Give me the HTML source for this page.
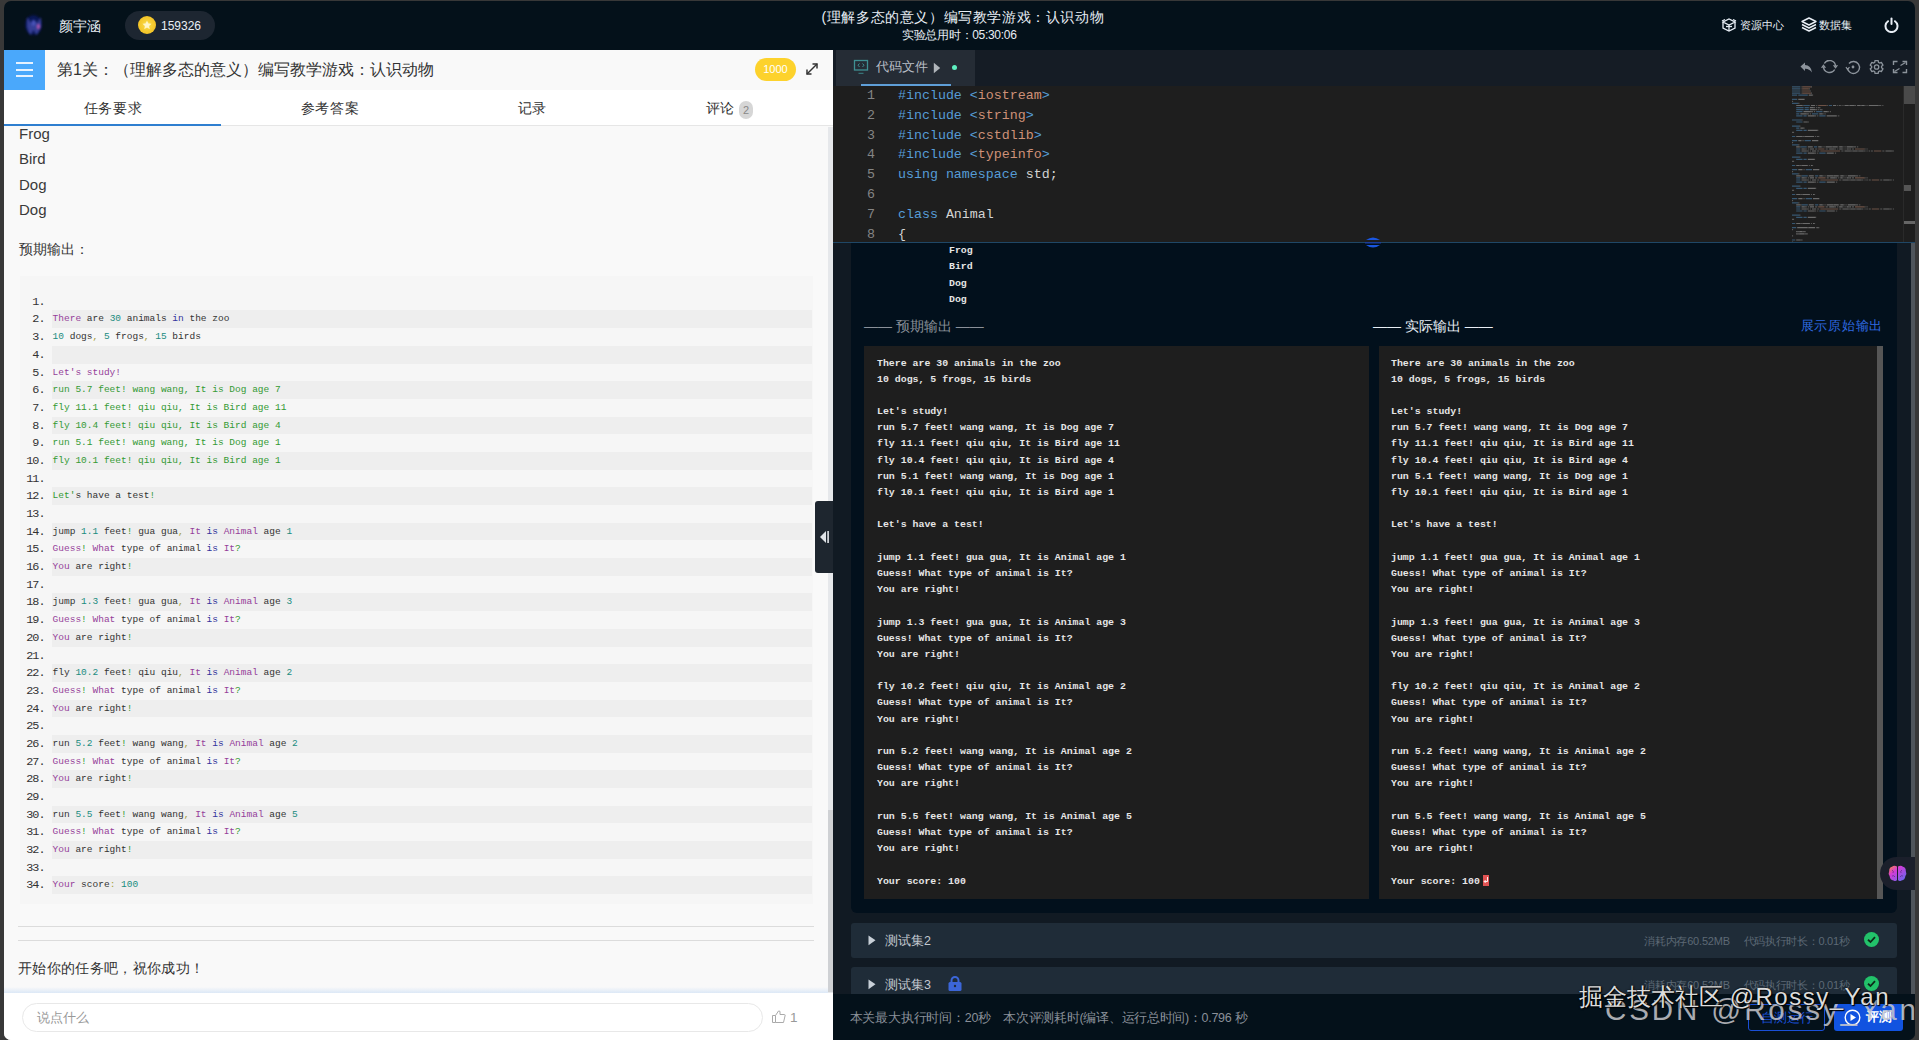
<!DOCTYPE html>
<html><head><meta charset="utf-8">
<style>
*{box-sizing:border-box;margin:0;padding:0}
html,body{width:1919px;height:1040px;overflow:hidden;background:#383838;font-family:"Liberation Sans",sans-serif}
.a{position:absolute;white-space:nowrap}
.mono{font-family:"Liberation Mono",monospace}
.cl{position:relative;height:17.69px;line-height:18.69px;font-family:"Liberation Mono",monospace;font-size:9.5px;color:#333;padding-left:48.6px;white-space:pre}
.cl.ev{background:linear-gradient(#eeeeee,#eeeeee) no-repeat 48px 0/760px 100%}
.cl i{font-style:normal;position:absolute;left:0;width:40.5px;text-align:right;font-size:11.8px;letter-spacing:-1px;color:#333}
.el{position:relative;height:19.83px;line-height:20.83px;font-family:"Liberation Mono",monospace;font-size:13.3px;color:#d4d4d4;padding-left:65px;white-space:pre}
.el i{font-style:normal;position:absolute;left:0;width:42px;text-align:right;color:#858585}
.out{font-family:"Liberation Mono",monospace;font-size:9.9px;line-height:16.19px;color:#e6e6e6;white-space:pre;font-weight:bold}
</style></head><body>
<!-- header -->
<div class="a" style="left:4px;top:1px;width:1911px;height:49px;background:#04111a;border-radius:7px 7px 0 0"></div>
<svg class="a" style="left:18px;top:9px" width="32" height="32" viewBox="18 9 32 32"><defs><radialGradient id="av"><stop offset="0" stop-color="#0d1d66"/><stop offset=".65" stop-color="#081650"/><stop offset="1" stop-color="#050d16" stop-opacity="0"/></radialGradient><filter id="bl"><feGaussianBlur stdDeviation="0.8"/></filter></defs><ellipse cx="33.5" cy="25" rx="11" ry="13" fill="url(#av)"/><g filter="url(#bl)"><path d="M27 17 L31 23 L34 20 L37 23 L41 17 L41 27 L38.5 32 L36.5 35 L33.5 30 L30.5 35 L28.5 32 L27 27 Z" fill="#3d44a0" opacity=".85"/><ellipse cx="38.5" cy="26.5" rx="1.5" ry="2.6" fill="#b058b0"/><ellipse cx="33.5" cy="23" rx="2" ry="3" fill="#4a52b8"/></g></svg>
<div class="a" style="left:59px;top:17px;font-size:14px;color:#e8eef5;line-height:18px">颜宇涵</div>
<div class="a" style="left:125px;top:11px;width:90px;height:29px;border-radius:15px;background:#1d2631"></div>
<div class="a" style="left:138px;top:16px;width:18px;height:18px;border-radius:50%;background:radial-gradient(circle,#fff3a0 0,#f7d23a 30%,#f0b818 100%)"></div>
<svg class="a" style="left:142px;top:20px" width="10" height="10" viewBox="0 0 10 10"><path d="M5 0.5 L6.3 3.6 L9.5 3.8 L7 5.9 L7.8 9.2 L5 7.4 L2.2 9.2 L3 5.9 L0.5 3.8 L3.7 3.6 Z" fill="#fff6c8"/></svg>
<div class="a" style="left:161px;top:18px;font-size:12px;color:#e8eef5;line-height:16px">159326</div>
<div class="a" style="left:821.5px;top:7.5px;font-size:14px;letter-spacing:0.6px;color:#e8eef5;line-height:18px">(理解多态的意义）编写教学游戏：认识动物</div>
<div class="a" style="left:902px;top:27px;font-size:12px;color:#e8eef5;line-height:16px;letter-spacing:-0.3px">实验总用时：05:30:06</div>
<svg class="a" style="left:1721px;top:17px" width="16" height="15" viewBox="0 0 16 15" fill="none" stroke="#e8eef5" stroke-width="1.3"><path d="M2 5 L8 2 L14 5 L8 8 Z"/><path d="M2 5 V11 L8 14 L14 11 V5"/><path d="M8 8 V14"/><path d="M1 4 L4 2.5 M15 4 L12 2.5"/><path d="M5 9.5 L11 9.5"/></svg>
<div class="a" style="left:1740px;top:17px;font-size:11px;color:#e8eef5;line-height:16px">资源中心</div>
<svg class="a" style="left:1801px;top:17px" width="16" height="15" viewBox="0 0 16 15" fill="none" stroke="#e8eef5" stroke-width="1.4" stroke-linejoin="round"><path d="M8 1 L15 4.5 L8 8 L1 4.5 Z"/><path d="M1 7.5 L8 11 L15 7.5"/><path d="M1 10.5 L8 14 L15 10.5"/></svg>
<div class="a" style="left:1819px;top:17px;font-size:11.3px;color:#e8eef5;line-height:16px">数据集</div>
<svg class="a" style="left:1883px;top:17px" width="17" height="16" viewBox="0 0 17 16" fill="none" stroke="#e8eef5" stroke-width="2" stroke-linecap="round"><path d="M5 4.2 A6 6 0 1 0 12 4.2"/><path d="M8.5 1.5 V7"/></svg>

<!-- left panel -->
<div class="a" style="left:4px;top:50px;width:829px;height:990px;background:#f9f9f9;border-radius:0 0 0 7px;overflow:hidden">
  <div class="a" style="left:0;top:0;width:41px;height:40px;background:#4aa8fb"></div>
  <div class="a" style="left:12px;top:12px;width:17px;height:2px;background:#e6f2ff"></div>
  <div class="a" style="left:12px;top:19px;width:17px;height:2px;background:#e6f2ff"></div>
  <div class="a" style="left:12px;top:25px;width:17px;height:2px;background:#e6f2ff"></div>
  <div class="a" style="left:53px;top:10px;font-size:16px;color:#333;line-height:20px">第1关：（理解多态的意义）编写教学游戏：认识动物</div>
  <div class="a" style="left:751px;top:8px;width:41px;height:23px;border-radius:12px;background:#fdd22c;color:#fff;font-size:11px;line-height:23px;text-align:center">1000</div>
  <svg class="a" style="left:801px;top:12px" width="14" height="14" viewBox="0 0 14 14" fill="none" stroke="#333" stroke-width="1.5"><path d="M2 12 L12 2"/><path d="M7.5 2 H12 V6.5"/><path d="M2 7.5 V12 H6.5"/></svg>
<div class="a" style="left:0;top:40px;width:829px;height:36px;background:#fff;border-bottom:1px solid #e6e6e6"></div>
  <div class="a" style="left:0;top:74px;width:217px;height:2px;background:#2f7fd0"></div>
  <div class="a" style="left:79.5px;top:49.3px;font-size:14px;letter-spacing:0.7px;color:#333;line-height:18px">任务要求</div>
  <div class="a" style="left:296.5px;top:49.3px;font-size:14px;letter-spacing:0.7px;color:#333;line-height:18px">参考答案</div>
  <div class="a" style="left:513.5px;top:49.3px;font-size:14px;letter-spacing:0.7px;color:#333;line-height:18px">记录</div>
  <div class="a" style="left:701.5px;top:49.3px;font-size:14px;letter-spacing:0.7px;color:#333;line-height:18px">评论</div>
  <div class="a" style="left:735px;top:51px;width:14px;height:18px;border-radius:8px;background:#d6d6d6;color:#888;font-size:11px;line-height:18px;text-align:center">2</div>

  <div class="a" style="left:15px;top:71px;font-size:15px;color:#3a3a3a;line-height:25.27px">Frog<br>Bird<br>Dog<br>Dog</div>
  <div class="a" style="left:15px;top:189.5px;font-size:14px;color:#333;line-height:18px">预期输出：</div>
  <div class="a" style="left:15.5px;top:225.6px;width:793px;height:628px;background:#f6f6f6"></div>
  <div class="a" style="left:0;top:242.8px;width:810px">
<div class="cl"><i>1.</i></div>
<div class="cl ev"><i>2.</i><span style="color:#953f9a">There</span> are <span style="color:#1a8c80">30</span> animals <span style="color:#32349c">in</span> the zoo</div>
<div class="cl"><i>3.</i><span style="color:#1a8c80">10</span> dogs<span style="color:#a8a040">,</span> <span style="color:#1a8c80">5</span> frogs<span style="color:#a8a040">,</span> <span style="color:#1a8c80">15</span> birds</div>
<div class="cl ev"><i>4.</i></div>
<div class="cl"><i>5.</i><span style="color:#953f9a">Let's study!</span></div>
<div class="cl ev"><i>6.</i><span style="color:#349a34">run 5.7 feet! wang wang, It is Dog age 7</span></div>
<div class="cl"><i>7.</i><span style="color:#349a34">fly 11.1 feet! qiu qiu, It is Bird age 11</span></div>
<div class="cl ev"><i>8.</i><span style="color:#349a34">fly 10.4 feet! qiu qiu, It is Bird age 4</span></div>
<div class="cl"><i>9.</i><span style="color:#349a34">run 5.1 feet! wang wang, It is Dog age 1</span></div>
<div class="cl ev"><i>10.</i><span style="color:#349a34">fly 10.1 feet! qiu qiu, It is Bird age 1</span></div>
<div class="cl"><i>11.</i></div>
<div class="cl ev"><i>12.</i><span style="color:#349a34">Let'</span>s have a test<span style="color:#349a34">!</span></div>
<div class="cl"><i>13.</i></div>
<div class="cl ev"><i>14.</i>jump <span style="color:#1a8c80">1.1</span> feet<span style="color:#349a34">!</span> gua gua<span style="color:#a8a040">,</span> <span style="color:#953f9a">It</span> <span style="color:#32349c">is</span> <span style="color:#953f9a">Animal</span> age <span style="color:#1a8c80">1</span></div>
<div class="cl"><i>15.</i><span style="color:#953f9a">Guess</span><span style="color:#349a34">!</span> <span style="color:#953f9a">What</span> type of animal <span style="color:#32349c">is</span> <span style="color:#953f9a">It</span><span style="color:#349a34">?</span></div>
<div class="cl ev"><i>16.</i><span style="color:#953f9a">You</span> are right<span style="color:#349a34">!</span></div>
<div class="cl"><i>17.</i></div>
<div class="cl ev"><i>18.</i>jump <span style="color:#1a8c80">1.3</span> feet<span style="color:#349a34">!</span> gua gua<span style="color:#a8a040">,</span> <span style="color:#953f9a">It</span> <span style="color:#32349c">is</span> <span style="color:#953f9a">Animal</span> age <span style="color:#1a8c80">3</span></div>
<div class="cl"><i>19.</i><span style="color:#953f9a">Guess</span><span style="color:#349a34">!</span> <span style="color:#953f9a">What</span> type of animal <span style="color:#32349c">is</span> <span style="color:#953f9a">It</span><span style="color:#349a34">?</span></div>
<div class="cl ev"><i>20.</i><span style="color:#953f9a">You</span> are right<span style="color:#349a34">!</span></div>
<div class="cl"><i>21.</i></div>
<div class="cl ev"><i>22.</i>fly <span style="color:#1a8c80">10.2</span> feet<span style="color:#349a34">!</span> qiu qiu<span style="color:#a8a040">,</span> <span style="color:#953f9a">It</span> <span style="color:#32349c">is</span> <span style="color:#953f9a">Animal</span> age <span style="color:#1a8c80">2</span></div>
<div class="cl"><i>23.</i><span style="color:#953f9a">Guess</span><span style="color:#349a34">!</span> <span style="color:#953f9a">What</span> type of animal <span style="color:#32349c">is</span> <span style="color:#953f9a">It</span><span style="color:#349a34">?</span></div>
<div class="cl ev"><i>24.</i><span style="color:#953f9a">You</span> are right<span style="color:#349a34">!</span></div>
<div class="cl"><i>25.</i></div>
<div class="cl ev"><i>26.</i>run <span style="color:#1a8c80">5.2</span> feet<span style="color:#349a34">!</span> wang wang<span style="color:#a8a040">,</span> <span style="color:#953f9a">It</span> <span style="color:#32349c">is</span> <span style="color:#953f9a">Animal</span> age <span style="color:#1a8c80">2</span></div>
<div class="cl"><i>27.</i><span style="color:#953f9a">Guess</span><span style="color:#349a34">!</span> <span style="color:#953f9a">What</span> type of animal <span style="color:#32349c">is</span> <span style="color:#953f9a">It</span><span style="color:#349a34">?</span></div>
<div class="cl ev"><i>28.</i><span style="color:#953f9a">You</span> are right<span style="color:#349a34">!</span></div>
<div class="cl"><i>29.</i></div>
<div class="cl ev"><i>30.</i>run <span style="color:#1a8c80">5.5</span> feet<span style="color:#349a34">!</span> wang wang<span style="color:#a8a040">,</span> <span style="color:#953f9a">It</span> <span style="color:#32349c">is</span> <span style="color:#953f9a">Animal</span> age <span style="color:#1a8c80">5</span></div>
<div class="cl"><i>31.</i><span style="color:#953f9a">Guess</span><span style="color:#349a34">!</span> <span style="color:#953f9a">What</span> type of animal <span style="color:#32349c">is</span> <span style="color:#953f9a">It</span><span style="color:#349a34">?</span></div>
<div class="cl ev"><i>32.</i><span style="color:#953f9a">You</span> are right<span style="color:#349a34">!</span></div>
<div class="cl"><i>33.</i></div>
<div class="cl ev"><i>34.</i><span style="color:#953f9a">Your</span> score<span style="color:#a8a040">:</span> <span style="color:#1a8c80">100</span></div>
  </div>
  <div class="a" style="left:14px;top:876px;width:796px;height:1px;background:#dcdcdc"></div>
  <div class="a" style="left:14px;top:890px;width:796px;height:1px;background:#dcdcdc"></div>
  <div class="a" style="left:14px;top:908px;font-size:14px;letter-spacing:0.35px;color:#333;line-height:20px">开始你的任务吧，祝你成功！</div>
  <div class="a" style="left:0;top:937px;width:829px;height:6px;background:linear-gradient(rgba(223,233,246,0),#dce8f6)"></div>
  <div class="a" style="left:0;top:943px;width:829px;height:47px;background:#fff"></div>
  <div class="a" style="left:18px;top:953px;width:741px;height:29px;border:1px solid #e8e8e8;border-radius:15px;background:#fff"></div>
  <div class="a" style="left:33px;top:959px;font-size:13px;color:#999;line-height:18px">说点什么</div>
  <svg class="a" style="left:768px;top:960px" width="14" height="13" viewBox="0 0 14 13" fill="none" stroke="#aaa" stroke-width="1"><path d="M0.5 5.5 H3.5 V12.5 H0.5 Z"/><path d="M3.5 5.5 L6.5 1 Q8 0.5 8 2 V4.5 H12.5 Q13.5 4.5 13 6 L11.5 12.5 H3.5"/></svg>
<div class="a" style="left:786px;top:959px;font-size:13.5px;color:#999;line-height:18px">1</div>
  <div class="a" style="left:824px;top:77px;width:5px;height:866px;background:#e6e8eb"></div>
  <div class="a" style="left:824px;top:760px;width:5px;height:182px;background:#cfd1d4"></div>
</div>

<!-- right side -->
<div class="a" style="left:833px;top:50px;width:1082px;height:990px;background:#111a23;border-radius:0 0 7px 0;overflow:hidden">
  <div class="a" style="left:0;top:0;width:1082px;height:36px;background:#151c25"></div>
  <div class="a" style="left:3px;top:0;width:139px;height:36px;background:#252c35"></div>
  <div class="a" style="left:43px;top:8px;font-size:13px;color:#b8bec6;line-height:18px">代码文件</div>
  <div class="a" style="left:28px;top:34px;width:90px;height:2px;background:#5f9fd8"></div>
  <div class="a" style="left:118.5px;top:14.5px;width:5.5px;height:5.5px;border-radius:50%;background:#5ef0c0"></div>
  <svg class="a" style="left:20px;top:9px" width="16" height="16" viewBox="0 0 16 16" fill="none" stroke="#3f8f92" stroke-width="1.3"><rect x="1.5" y="1.5" width="13" height="9.5"/><path d="M5.5 14.3 H10.5" stroke-width="0.9"/><path d="M6.5 4.5 L5 6.2 L6.5 8 M9.5 4.5 L11 6.2 L9.5 8" stroke-width="1"/></svg>
  <svg class="a" style="left:100px;top:12px" width="8" height="12" viewBox="0 0 8 12"><path d="M0.8 0.8 L7.2 6 L0.8 11.2 Z" fill="#b0b5ba"/></svg>
  <svg class="a" style="left:966px;top:10px" width="112" height="16" viewBox="0 0 112 16" fill="none" stroke="#8c939b" stroke-width="1.4">
    <path d="M1.5 6.5 L6 2.5 V5 Q12 5 13 12.5 Q10 8.5 6 8.8 V11 Z" fill="#8c939b" stroke="none"/>
    <path d="M25.3 3.5 A6 6 0 0 1 36.5 6.5 M35.7 9.5 A6 6 0 0 1 24.5 6.5"/><path d="M34.6 5.2 L36.5 7.6 L38.4 5.2" stroke-width="1.3"/><path d="M22.6 7.8 L24.5 5.4 L26.4 7.8" stroke-width="1.3"/>
    <circle cx="20" cy="7" r="0" />
    <path d="M48.5 8 A6 6 0 1 0 50 3.5"/><path d="M47 7 L48.5 9.5 L50.5 7.2" stroke-width="1.2"/><circle cx="54" cy="7" r="1.4" fill="#8c939b" stroke="none"/>
    <g transform="translate(77.6,7)"><path d="M-1.60 -6.40 L1.60 -6.40 L1.87 -4.64 L3.08 -3.94 L4.75 -4.58 L6.34 -1.82 L4.95 -0.70 L4.95 0.70 L6.34 1.82 L4.75 4.58 L3.08 3.94 L1.87 4.64 L1.60 6.40 L-1.60 6.40 L-1.87 4.64 L-3.08 3.94 L-4.75 4.58 L-6.34 1.82 L-4.95 0.70 L-4.95 -0.70 L-6.34 -1.82 L-4.75 -4.58 L-3.08 -3.94 L-1.87 -4.64 Z" stroke-width="1.3" stroke-linejoin="round"/><circle r="2.2" stroke-width="1.3"/></g>
    <path d="M94.5 5 V1.5 H98.5 M103.5 1.5 H107.5 V5 M107.5 9 V12.5 H103.5 M98.5 12.5 H94.5 V9"/><path d="M101.5 5.5 L106.5 2.5 M100.5 8.5 L95.5 11.5" stroke-width="1.2"/>
  </svg>
  <div class="a" style="left:0;top:36px;width:1082px;height:156px;background:#1e1e1e;padding-top:0">
<div class="el"><i>1</i><span style="color:#569cd6">#include</span> <span style="color:#569cd6">&lt;</span><span style="color:#ce9178">iostream</span><span style="color:#569cd6">&gt;</span></div>
<div class="el"><i>2</i><span style="color:#569cd6">#include</span> <span style="color:#569cd6">&lt;</span><span style="color:#ce9178">string</span><span style="color:#569cd6">&gt;</span></div>
<div class="el"><i>3</i><span style="color:#569cd6">#include</span> <span style="color:#569cd6">&lt;</span><span style="color:#ce9178">cstdlib</span><span style="color:#569cd6">&gt;</span></div>
<div class="el"><i>4</i><span style="color:#569cd6">#include</span> <span style="color:#569cd6">&lt;</span><span style="color:#ce9178">typeinfo</span><span style="color:#569cd6">&gt;</span></div>
<div class="el"><i>5</i><span style="color:#569cd6">using</span> <span style="color:#569cd6">namespace</span> std;</div>
<div class="el"><i>6</i></div>
<div class="el"><i>7</i><span style="color:#569cd6">class</span> Animal</div>
<div class="el"><i>8</i>{</div>
  </div>
  <div class="a" style="left:0;top:192px;width:1082px;height:1px;background:#1f4766"></div>
  <div class="a" style="left:18px;top:193px;width:1046px;height:670px;background:#02101c;border-radius:0 0 6px 6px"></div>
  <div class="a out" style="left:116px;top:193px;line-height:16.3px">Frog
Bird
Dog
Dog</div>
  <div class="a" style="left:31px;top:266.5px;font-size:14px;color:#8a9099;line-height:18px">—— 预期输出 ——</div>
  <div class="a" style="left:540px;top:266.5px;font-size:14px;color:#e8eef5;line-height:18px">—— 实际输出 ——</div>
  <div class="a" style="left:967.5px;top:267px;font-size:13px;letter-spacing:0.8px;color:#2f6ae0;line-height:18px">展示原始输出</div>
  <div class="a" style="left:31px;top:296px;width:505px;height:553px;background:#1e1e1e"></div>
  <div class="a" style="left:546px;top:296px;width:498px;height:553px;background:#1e1e1e"></div>
  <div class="a" style="left:1044px;top:296px;width:6px;height:553px;background:#565656"></div>
  <div class="a out" style="left:44px;top:305.5px">There are 30 animals in the zoo
10 dogs, 5 frogs, 15 birds

Let&#x27;s study!
run 5.7 feet! wang wang, It is Dog age 7
fly 11.1 feet! qiu qiu, It is Bird age 11
fly 10.4 feet! qiu qiu, It is Bird age 4
run 5.1 feet! wang wang, It is Dog age 1
fly 10.1 feet! qiu qiu, It is Bird age 1

Let&#x27;s have a test!

jump 1.1 feet! gua gua, It is Animal age 1
Guess! What type of animal is It?
You are right!

jump 1.3 feet! gua gua, It is Animal age 3
Guess! What type of animal is It?
You are right!

fly 10.2 feet! qiu qiu, It is Animal age 2
Guess! What type of animal is It?
You are right!

run 5.2 feet! wang wang, It is Animal age 2
Guess! What type of animal is It?
You are right!

run 5.5 feet! wang wang, It is Animal age 5
Guess! What type of animal is It?
You are right!

Your score: 100</div>
  <div class="a out" style="left:558px;top:305.5px">There are 30 animals in the zoo
10 dogs, 5 frogs, 15 birds

Let&#x27;s study!
run 5.7 feet! wang wang, It is Dog age 7
fly 11.1 feet! qiu qiu, It is Bird age 11
fly 10.4 feet! qiu qiu, It is Bird age 4
run 5.1 feet! wang wang, It is Dog age 1
fly 10.1 feet! qiu qiu, It is Bird age 1

Let&#x27;s have a test!

jump 1.1 feet! gua gua, It is Animal age 1
Guess! What type of animal is It?
You are right!

jump 1.3 feet! gua gua, It is Animal age 3
Guess! What type of animal is It?
You are right!

fly 10.2 feet! qiu qiu, It is Animal age 2
Guess! What type of animal is It?
You are right!

run 5.2 feet! wang wang, It is Animal age 2
Guess! What type of animal is It?
You are right!

run 5.5 feet! wang wang, It is Animal age 5
Guess! What type of animal is It?
You are right!

Your score: 100</div>
  <div class="a" style="left:18px;top:873px;width:1046px;height:35px;background:#1f2c38;border-radius:3px"></div>
  <div class="a" style="left:52px;top:882px;font-size:12.5px;color:#c2c8cf;line-height:18px">测试集2</div>
  <div class="a" style="left:18px;top:917px;width:1046px;height:35px;background:#1f2c38;border-radius:3px"></div>
  <div class="a" style="left:52px;top:926px;font-size:12.5px;color:#c2c8cf;line-height:18px">测试集3</div>
  <div class="a" style="left:0;top:944px;width:1082px;height:46px;background:#04111a"></div>
  <div class="a" style="left:16.5px;top:959px;font-size:12.5px;color:#8a9099;line-height:18px;letter-spacing:-0.2px">本关最大执行时间：20秒</div>
  <div class="a" style="left:170.4px;top:959px;font-size:12.5px;color:#8a9099;line-height:18px;letter-spacing:-0.3px">本次评测耗时(编译、运行总时间)：0.796 秒</div>
  <svg class="a" style="left:0;top:0;opacity:.45" width="1061" height="192" fill="none" stroke-width="1.2"><path stroke="#569cd6" d="M959.0 36.9h8.4M959.0 38.9h8.4M959.0 41.0h8.4M959.0 43.1h8.4M959.0 45.1h5.2M965.3 45.1h9.5M959.0 49.3h5.2M959.0 53.4h6.3M970.5 55.5h6.3M995.8 55.5h3.2M963.2 57.6h7.4M971.6 57.6h4.2M963.2 59.6h7.4M971.6 59.6h4.2M963.2 61.7h6.3M983.2 61.7h6.3M963.2 63.8h3.2M979.0 63.8h6.3M963.2 65.8h6.3M970.5 65.8h3.2M986.3 65.8h6.3M959.0 70.0h9.5M963.2 72.0h6.3M959.0 76.2h7.4M963.2 78.2h3.2M963.2 80.3h6.3M970.5 80.3h3.2M959.0 86.5h3.2M959.0 90.7h5.2M971.6 90.7h6.3M959.0 94.8h6.3M967.4 96.9h6.3M981.0 96.9h3.2M963.2 99.0h4.2M963.2 101.0h4.2M963.2 103.1h6.3M970.5 103.1h3.2M986.3 103.1h6.3M959.0 107.2h7.4M963.2 109.3h6.3M970.5 109.3h3.2M959.0 115.5h3.2M959.0 119.7h5.2M972.7 119.7h6.3M959.0 123.8h6.3M968.5 125.9h6.3M982.1 125.9h3.2M963.2 127.9h4.2M963.2 130.0h4.2M963.2 132.1h6.3M970.5 132.1h3.2M986.3 132.1h6.3M959.0 136.2h7.4M963.2 138.3h6.3M970.5 138.3h3.2M959.0 144.5h3.2M959.0 148.6h5.2M972.7 148.6h6.3M959.0 152.8h6.3M968.5 154.8h6.3M982.1 154.8h3.2M963.2 156.9h4.2M963.2 159.0h4.2M963.2 161.0h6.3M970.5 161.0h3.2M986.3 161.0h6.3M959.0 165.2h7.4M963.2 167.3h6.3M970.5 167.3h3.2M959.0 173.5h3.2M959.0 177.6h4.2M959.0 190.0h3.2M963.2 196.2h3.2"/><path stroke="#a0a0a0" d="M968.5 36.9h1.1M977.9 36.9h1.1M968.5 38.9h1.1M975.8 38.9h1.1M968.5 41.0h1.1M976.8 41.0h1.1M968.5 43.1h1.1M977.9 43.1h1.1M979.0 45.1h1.1M959.0 51.3h1.1M965.3 53.4h1.1M969.5 55.5h1.1M983.2 55.5h1.1M993.7 55.5h1.1M1004.2 55.5h1.1M1007.3 55.5h1.1M1009.4 55.5h1.1M1015.7 55.5h1.1M1021.0 55.5h1.1M1022.0 55.5h1.1M1027.2 55.5h1.1M1031.5 55.5h1.1M1033.5 55.5h1.1M1045.1 55.5h1.1M1046.2 55.5h1.1M1047.2 55.5h1.1M1049.3 55.5h1.1M980.0 57.6h1.1M981.0 57.6h1.1M983.2 57.6h1.1M986.3 57.6h1.1M982.1 59.6h1.1M983.2 59.6h1.1M985.2 59.6h1.1M988.4 59.6h1.1M977.9 61.7h1.1M979.0 61.7h1.1M981.0 61.7h1.1M994.7 61.7h1.1M996.8 61.7h1.1M973.7 63.8h1.1M974.8 63.8h1.1M976.8 63.8h1.1M989.5 63.8h1.1M991.5 63.8h1.1M981.0 65.8h1.1M982.1 65.8h1.1M984.2 65.8h1.1M1003.1 65.8h1.1M1005.2 65.8h1.1M968.5 70.0h1.1M974.8 72.0h1.1M966.3 76.2h1.1M970.5 78.2h1.1M984.2 80.3h1.1M959.0 82.4h1.1M960.0 82.4h1.1M969.5 86.5h1.1M970.5 86.5h1.1M982.1 86.5h1.1M985.2 86.5h1.1M969.5 90.7h1.1M959.0 92.7h1.1M965.3 94.8h1.1M966.3 96.9h1.1M979.0 96.9h1.1M988.4 96.9h1.1M990.5 96.9h1.1M998.9 96.9h1.1M1004.2 96.9h1.1M1009.4 96.9h1.1M1011.5 96.9h1.1M1019.9 96.9h1.1M1021.0 96.9h1.1M1022.0 96.9h1.1M1024.1 96.9h1.1M971.6 99.0h1.1M972.7 99.0h1.1M974.8 99.0h1.1M982.1 99.0h1.1M983.2 99.0h1.1M992.6 99.0h1.1M993.7 99.0h1.1M995.8 99.0h1.1M1001.0 99.0h1.1M1002.0 99.0h1.1M1004.2 99.0h1.1M1009.4 99.0h1.1M1011.5 99.0h1.1M1015.7 99.0h1.1M1018.8 99.0h1.1M1019.9 99.0h1.1M1031.5 99.0h1.1M1033.5 99.0h1.1M973.7 101.0h1.1M974.8 101.0h1.1M976.8 101.0h1.1M984.2 101.0h1.1M985.2 101.0h1.1M1008.3 101.0h1.1M1009.4 101.0h1.1M1017.8 101.0h1.1M1018.8 101.0h1.1M1024.1 101.0h1.1M1025.2 101.0h1.1M1030.4 101.0h1.1M1031.5 101.0h1.1M1033.5 101.0h1.1M1037.8 101.0h1.1M1038.8 101.0h1.1M1049.3 101.0h1.1M1050.3 101.0h1.1M1058.8 101.0h1.1M1059.8 101.0h1.1M1061.9 101.0h1.1M1063.0 101.0h1.1M1069.2 101.0h1.1M1071.3 101.0h1.1M981.0 103.1h1.1M982.1 103.1h1.1M984.2 103.1h1.1M1000.0 103.1h1.1M1002.0 103.1h1.1M966.3 107.2h1.1M981.0 109.3h1.1M959.0 111.4h1.1M960.0 111.4h1.1M966.3 115.5h1.1M967.4 115.5h1.1M975.8 115.5h1.1M979.0 115.5h1.1M970.5 119.7h1.1M959.0 121.7h1.1M965.3 123.8h1.1M967.4 125.9h1.1M980.0 125.9h1.1M989.5 125.9h1.1M991.5 125.9h1.1M1000.0 125.9h1.1M1005.2 125.9h1.1M1010.5 125.9h1.1M1012.5 125.9h1.1M1022.0 125.9h1.1M1023.0 125.9h1.1M1024.1 125.9h1.1M1026.2 125.9h1.1M971.6 127.9h1.1M972.7 127.9h1.1M974.8 127.9h1.1M982.1 127.9h1.1M983.2 127.9h1.1M993.7 127.9h1.1M994.7 127.9h1.1M996.8 127.9h1.1M1002.0 127.9h1.1M1003.1 127.9h1.1M1005.2 127.9h1.1M1009.4 127.9h1.1M1011.5 127.9h1.1M1015.7 127.9h1.1M1018.8 127.9h1.1M1019.9 127.9h1.1M1031.5 127.9h1.1M1033.5 127.9h1.1M973.7 130.0h1.1M974.8 130.0h1.1M976.8 130.0h1.1M984.2 130.0h1.1M985.2 130.0h1.1M1006.2 130.0h1.1M1007.3 130.0h1.1M1015.7 130.0h1.1M1016.8 130.0h1.1M1022.0 130.0h1.1M1023.0 130.0h1.1M1028.3 130.0h1.1M1029.3 130.0h1.1M1031.5 130.0h1.1M1035.7 130.0h1.1M1036.7 130.0h1.1M1047.2 130.0h1.1M1048.2 130.0h1.1M1056.7 130.0h1.1M1057.7 130.0h1.1M1059.8 130.0h1.1M1060.8 130.0h1.1M1067.2 130.0h1.1M1069.2 130.0h1.1M981.0 132.1h1.1M982.1 132.1h1.1M984.2 132.1h1.1M1001.0 132.1h1.1M1003.1 132.1h1.1M966.3 136.2h1.1M982.1 138.3h1.1M959.0 140.3h1.1M960.0 140.3h1.1M967.4 144.5h1.1M968.5 144.5h1.1M977.9 144.5h1.1M981.0 144.5h1.1M970.5 148.6h1.1M959.0 150.7h1.1M965.3 152.8h1.1M967.4 154.8h1.1M980.0 154.8h1.1M989.5 154.8h1.1M991.5 154.8h1.1M1000.0 154.8h1.1M1005.2 154.8h1.1M1010.5 154.8h1.1M1012.5 154.8h1.1M1022.0 154.8h1.1M1023.0 154.8h1.1M1024.1 154.8h1.1M1026.2 154.8h1.1M971.6 156.9h1.1M972.7 156.9h1.1M974.8 156.9h1.1M982.1 156.9h1.1M983.2 156.9h1.1M992.6 156.9h1.1M993.7 156.9h1.1M995.8 156.9h1.1M1001.0 156.9h1.1M1002.0 156.9h1.1M1004.2 156.9h1.1M1009.4 156.9h1.1M1011.5 156.9h1.1M1015.7 156.9h1.1M1018.8 156.9h1.1M1019.9 156.9h1.1M1031.5 156.9h1.1M1033.5 156.9h1.1M973.7 159.0h1.1M974.8 159.0h1.1M976.8 159.0h1.1M984.2 159.0h1.1M985.2 159.0h1.1M1006.2 159.0h1.1M1007.3 159.0h1.1M1015.7 159.0h1.1M1016.8 159.0h1.1M1022.0 159.0h1.1M1023.0 159.0h1.1M1028.3 159.0h1.1M1029.3 159.0h1.1M1031.5 159.0h1.1M1035.7 159.0h1.1M1036.7 159.0h1.1M1047.2 159.0h1.1M1048.2 159.0h1.1M1056.7 159.0h1.1M1057.7 159.0h1.1M1059.8 159.0h1.1M1060.8 159.0h1.1M1067.2 159.0h1.1M1069.2 159.0h1.1M981.0 161.0h1.1M982.1 161.0h1.1M984.2 161.0h1.1M1001.0 161.0h1.1M1003.1 161.0h1.1M966.3 165.2h1.1M982.1 167.3h1.1M959.0 169.3h1.1M960.0 169.3h1.1M967.4 173.5h1.1M968.5 173.5h1.1M977.9 173.5h1.1M981.0 173.5h1.1M974.8 177.6h1.1M983.2 177.6h1.1M985.2 177.6h1.1M959.0 179.7h1.1M964.2 181.7h1.1M965.3 181.7h1.1M969.5 181.7h1.1M970.5 181.7h1.1M971.6 181.7h1.1M964.2 183.8h1.1M965.3 183.8h1.1M971.6 183.8h1.1M972.7 183.8h1.1M973.7 183.8h1.1M959.0 185.9h1.1M967.4 190.0h1.1M968.5 190.0h1.1M959.0 192.1h1.1M968.5 194.2h1.1M973.7 194.2h1.1M979.0 194.2h1.1M980.0 194.2h1.1M981.0 194.2h1.1M968.5 196.2h1.1"/><path stroke="#ce9178" d="M969.5 36.9h8.4M969.5 38.9h6.3M969.5 41.0h7.4M969.5 43.1h8.4M985.2 55.5h8.4M985.2 99.0h6.3M1022.0 99.0h9.5M987.3 101.0h19.9M1040.9 101.0h7.4M985.2 127.9h7.4M1022.0 127.9h9.5M987.3 130.0h17.9M1038.8 130.0h7.4M985.2 156.9h6.3M1022.0 156.9h9.5M987.3 159.0h17.9M1038.8 159.0h7.4"/><path stroke="#c8c8c8" d="M975.8 45.1h3.2M965.3 49.3h6.3M963.2 55.5h6.3M977.9 55.5h4.2M1000.0 55.5h3.2M1006.2 55.5h1.1M1011.5 55.5h4.2M1016.8 55.5h4.2M1024.1 55.5h3.2M1028.3 55.5h3.2M1035.7 55.5h9.5M976.8 57.6h3.2M985.2 57.6h1.1M976.8 59.6h5.2M987.3 59.6h1.1M970.5 61.7h7.4M990.5 61.7h4.2M967.4 63.8h6.3M986.3 63.8h3.2M974.8 65.8h6.3M993.7 65.8h9.5M970.5 72.0h4.2M967.4 78.2h3.2M974.8 80.3h9.5M963.2 86.5h6.3M971.6 86.5h9.5M984.2 86.5h1.1M965.3 90.7h3.2M979.0 90.7h6.3M963.2 96.9h3.2M974.8 96.9h4.2M985.2 96.9h3.2M992.6 96.9h6.3M1000.0 96.9h4.2M1006.2 96.9h3.2M1013.6 96.9h6.3M968.5 99.0h3.2M976.8 99.0h4.2M996.8 99.0h4.2M1006.2 99.0h3.2M1013.6 99.0h2.1M1016.8 99.0h1.1M968.5 101.0h5.2M979.0 101.0h4.2M1011.5 101.0h6.3M1019.9 101.0h4.2M1026.2 101.0h4.2M1035.7 101.0h1.1M1052.5 101.0h6.3M1065.0 101.0h4.2M974.8 103.1h6.3M993.7 103.1h6.3M974.8 109.3h6.3M963.2 115.5h3.2M968.5 115.5h6.3M977.9 115.5h1.1M965.3 119.7h4.2M980.0 119.7h6.3M963.2 125.9h4.2M975.8 125.9h4.2M986.3 125.9h3.2M993.7 125.9h6.3M1001.0 125.9h4.2M1007.3 125.9h3.2M1014.7 125.9h7.4M968.5 127.9h3.2M976.8 127.9h4.2M997.8 127.9h4.2M1007.3 127.9h2.1M1013.6 127.9h2.1M1016.8 127.9h1.1M968.5 130.0h5.2M979.0 130.0h4.2M1009.4 130.0h6.3M1017.8 130.0h4.2M1024.1 130.0h4.2M1033.5 130.0h1.1M1050.3 130.0h6.3M1063.0 130.0h4.2M974.8 132.1h6.3M993.7 132.1h7.4M974.8 138.3h7.4M963.2 144.5h4.2M969.5 144.5h7.4M980.0 144.5h1.1M965.3 148.6h4.2M980.0 148.6h6.3M963.2 154.8h4.2M975.8 154.8h4.2M986.3 154.8h3.2M993.7 154.8h6.3M1001.0 154.8h4.2M1007.3 154.8h3.2M1014.7 154.8h7.4M968.5 156.9h3.2M976.8 156.9h4.2M996.8 156.9h4.2M1006.2 156.9h3.2M1013.6 156.9h2.1M1016.8 156.9h1.1M968.5 159.0h5.2M979.0 159.0h4.2M1009.4 159.0h6.3M1017.8 159.0h4.2M1024.1 159.0h4.2M1033.5 159.0h1.1M1050.3 159.0h6.3M1063.0 159.0h4.2M974.8 161.0h6.3M993.7 161.0h7.4M974.8 167.3h7.4M963.2 173.5h4.2M969.5 173.5h7.4M980.0 173.5h1.1M964.2 177.6h10.5M975.8 177.6h6.3M984.2 177.6h1.1M963.2 181.7h1.1M966.3 181.7h3.2M963.2 183.8h1.1M966.3 183.8h5.2M963.2 190.0h4.2M963.2 194.2h5.2M969.5 194.2h4.2M974.8 194.2h4.2M967.4 196.2h1.1"/></svg>
  <div class="a" style="left:1070px;top:36px;width:12px;height:156px;background:#1e1e1e;border-left:1px solid #2a2a2a"></div>
  <div class="a" style="left:1071px;top:135px;width:7px;height:6px;background:#555"></div>
  <div class="a" style="left:1071px;top:171px;width:11px;height:3px;background:#666"></div>
  <div class="a" style="left:1071px;top:36px;width:11px;height:18px;background:#4a4a4a"></div>
  <div class="a" style="left:1078px;top:193px;width:4px;height:751px;background:#4f555b"></div>
  <!-- sash -->
  <svg class="a" style="left:532px;top:186px" width="16" height="13" viewBox="0 0 16 13"><path d="M1 4 Q8 -1 15 4 Z" fill="#1a56e0"/><path d="M1 9 Q8 14 15 9 Z" fill="#1a56e0"/><rect x="0" y="6" width="16" height="1.5" fill="#1a3c9a"/></svg>
  <!-- red cursor -->
  <div class="a" style="left:650px;top:825px;width:6px;height:11px;background:#e05252"></div>
  <svg class="a" style="left:650px;top:826px" width="6" height="9" viewBox="0 0 6 9" fill="none" stroke="#fff" stroke-width="0.9"><path d="M4.5 1 V5.5 H1.2 M2.6 4 L1.2 5.5 L2.6 7"/></svg>
  <!-- brain bubble -->
  <div class="a" style="left:1047px;top:807px;width:40px;height:33px;border-radius:17px 0 0 17px;background:#1b1f2b"></div>
  <svg class="a" style="left:1055px;top:815px" width="19" height="17" viewBox="0 0 19 17"><defs><linearGradient id="bg1" x1="0" y1="0" x2="1" y2="1"><stop offset="0" stop-color="#ff8a3d"/><stop offset=".35" stop-color="#d23cd8"/><stop offset="1" stop-color="#5b6cf0"/></linearGradient></defs><path d="M9 1.5 Q6 0 4 1.8 Q1 2.5 1.2 6 Q0 8.5 1.6 11 Q2 15 5.5 15.5 Q8 16.8 9 15 Z M10 1.5 Q13 0 15 1.8 Q18 2.5 17.8 6 Q19 8.5 17.4 11 Q17 15 13.5 15.5 Q11 16.8 10 15 Z" fill="url(#bg1)"/><path d="M4 5 Q6 6 5 8 M14 5 Q12 6 13 8 M4 11 Q6 10 7 12 M15 11 Q13 10 12 12" stroke="#2a1f5a" stroke-width="0.8" fill="none" opacity=".6"/></svg>
  <!-- test row decorations -->
  <svg class="a" style="left:35px;top:885px" width="8" height="11" viewBox="0 0 8 11"><path d="M0.5 0.5 L7.5 5.3 L0.5 10.2 Z" fill="#c8d0d8"/></svg>
  <svg class="a" style="left:35px;top:929px" width="8" height="11" viewBox="0 0 8 11"><path d="M0.5 0.5 L7.5 5.3 L0.5 10.2 Z" fill="#c8d0d8"/></svg>
  <svg class="a" style="left:115px;top:926px" width="14" height="15" viewBox="0 0 14 15"><path d="M3.5 6.5 V4.5 A3.5 3.5 0 0 1 10.5 4.5 V6.5" fill="none" stroke="#3c66d8" stroke-width="2"/><rect x="0.5" y="6" width="13" height="9" rx="1.5" fill="#3c66d8"/><circle cx="7" cy="10" r="1.2" fill="#1f2c38"/></svg>
  <div class="a" style="left:811px;top:882px;font-size:11px;color:#5d6975;line-height:18px;letter-spacing:-0.2px">消耗内存60.52MB</div><div class="a" style="left:910.6px;top:882px;font-size:11px;color:#5d6975;line-height:18px;letter-spacing:-0.3px">代码执行时长：0.01秒</div>
  <div class="a" style="left:811px;top:926px;font-size:11px;color:#5d6975;line-height:18px;letter-spacing:-0.2px">消耗内存60.52MB</div><div class="a" style="left:910.6px;top:926px;font-size:11px;color:#5d6975;line-height:18px;letter-spacing:-0.3px">代码执行时长：0.01秒</div>
  <svg class="a" style="left:1031px;top:882px" width="15" height="15" viewBox="0 0 15 15"><circle cx="7.5" cy="7.5" r="7.5" fill="#22c26a"/><path d="M4 7.8 L6.5 10 L11 5.2" fill="none" stroke="#0d2a1a" stroke-width="1.8"/></svg>
  <svg class="a" style="left:1031px;top:926px" width="15" height="15" viewBox="0 0 15 15"><circle cx="7.5" cy="7.5" r="7.5" fill="#22c26a"/><path d="M4 7.8 L6.5 10 L11 5.2" fill="none" stroke="#0d2a1a" stroke-width="1.8"/></svg>
</div>
<!-- collapse button -->
<div class="a" style="left:815px;top:501px;width:18px;height:72px;background:#1e262f;border-radius:3px 0 0 3px"></div>
<svg class="a" style="left:819px;top:530px" width="11" height="14" viewBox="0 0 11 14"><path d="M7 1 L1 7 L7 13 Z" fill="#e0e4e8"/><rect x="8.3" y="1" width="1.6" height="12" fill="#e0e4e8"/></svg>
<!-- footer buttons -->
<div class="a" style="left:1748px;top:1004px;width:77px;height:27px;border:1px solid #1a4fd6;border-radius:3px;color:#1a4fd6;font-size:13px;line-height:25px;text-align:center">自测运行</div>
<div class="a" style="left:1834px;top:1004px;width:69px;height:27px;background:#1153e0;border-radius:3px"></div>
<svg class="a" style="left:1844px;top:1009px" width="17" height="17" viewBox="0 0 17 17"><circle cx="8.5" cy="8.5" r="7.3" fill="none" stroke="#fff" stroke-width="1.4"/><path d="M6.5 5 L12 8.5 L6.5 12 Z" fill="#fff"/></svg>
<div class="a" style="left:1866px;top:1008px;font-size:13px;color:#fff;line-height:18px;font-weight:bold">评测</div>
<!-- watermarks -->
<div class="a" style="left:1605px;top:990.7px;font-size:29.5px;color:rgba(200,200,205,.85);line-height:38px;letter-spacing:2.9px">CSDN @Rossy_Yan</div>
<div class="a" style="left:1579px;top:982px;font-size:24px;color:#dcdcdc;line-height:30px;text-shadow:0 0 2px #000,1px 1px 1px #000">掘金技术社区 <span style="letter-spacing:1.5px">@Rossy_Yan</span></div>
</body></html>
